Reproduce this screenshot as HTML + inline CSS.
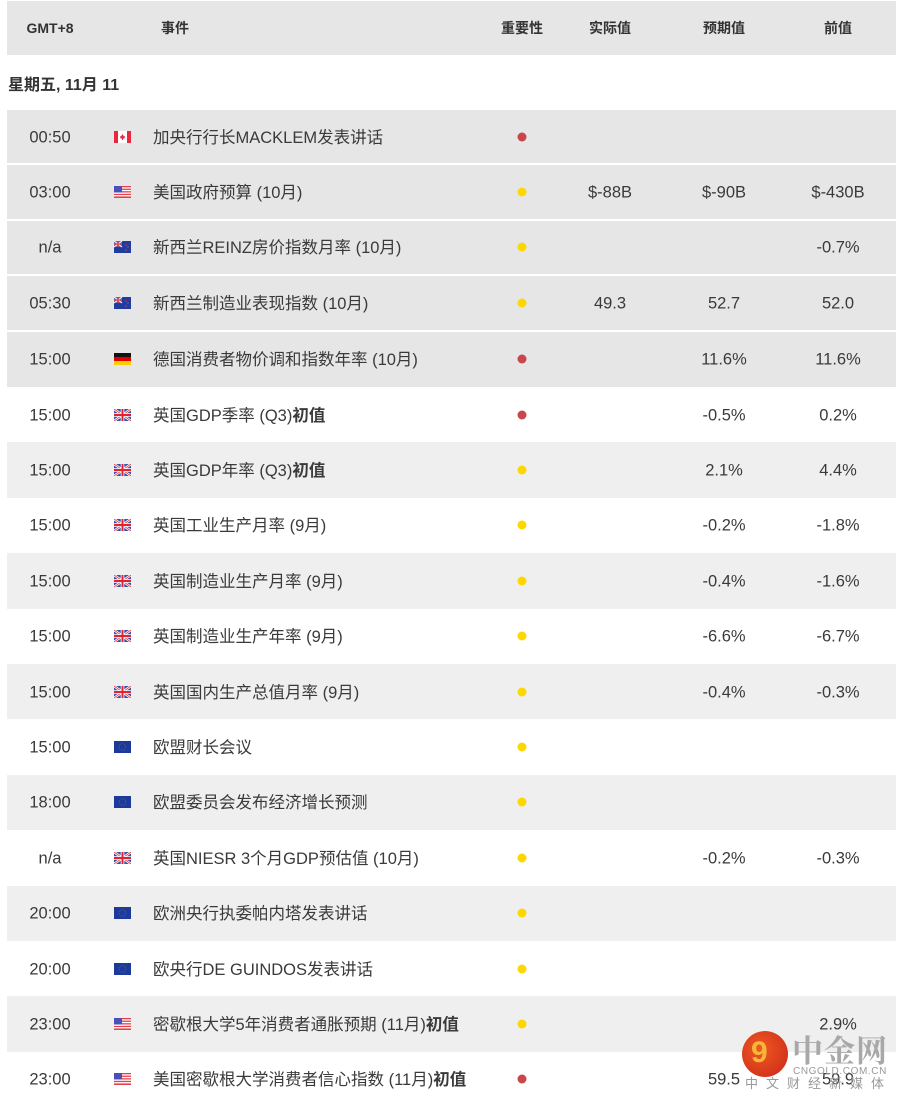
<!DOCTYPE html>
<html><head><meta charset="utf-8">
<style>
*{margin:0;padding:0;box-sizing:border-box}
body{width:899px;height:1104px;background:#fff;position:relative;overflow:hidden;font-family:"Liberation Sans","Noto Sans CJK SC",sans-serif;color:#3a3a3a}
.hdr{position:absolute;left:7px;top:1px;width:889px;height:54px;background:#e6e6e6;font-size:14px;font-weight:bold;color:#333}
.hdr span,.row span{position:absolute;top:50%;transform:translate(-50%,-50%);white-space:nowrap}
.date{position:absolute;left:8px;top:71px;font-size:16px;font-weight:bold;color:#333}
.row{position:absolute;left:7px;width:889px;height:55.4px;font-size:16.5px}
.g{background:#e6e6e6;height:53.4px}
.l{background:#efefef}
.w{background:#fff}
.row span{margin-top:1px}
.row span.ev{transform:translate(0,-50%);left:146px;margin-top:-1px}
.row span.dot{width:9px;height:9px;border-radius:50%;left:515px;margin-top:0}
.r{background:#c9464b}.y{background:#fcd700}
.t{left:43px}.a{left:603px}.f{left:717px}.p{left:831px}
.flag{position:absolute;left:107px;top:50%;margin-top:-6px;width:17px;height:12px}
b{font-weight:bold}
</style></head><body>
<svg width="0" height="0" style="position:absolute;left:0;top:0">
<defs>
<symbol id="ca" viewBox="0 0 17 12"><rect width="17" height="12" fill="#fff"/><rect width="4" height="12" fill="#e8283c"/><rect x="13" width="4" height="12" fill="#e8283c"/><path d="M8.5 3l1.5 2.5 1-.5-.5 2.5h-4l-.5-2.5 1 .5z" fill="#e8283c"/><rect x="8" y="7" width="1" height="2" fill="#e8283c"/></symbol>
<symbol id="us" viewBox="0 0 17 12"><rect width="17" height="12" fill="#fff"/><g fill="#e0414d"><rect y="0" width="17" height="1.3"/><rect y="2.6" width="17" height="1.3"/><rect y="5.2" width="17" height="1.3"/><rect y="7.8" width="17" height="1.3"/><rect y="10.4" width="17" height="1.6"/></g><rect width="8" height="6.5" fill="#4b50b8"/></symbol>
<symbol id="nz" viewBox="0 0 17 12"><rect width="17" height="12" fill="#1f3d9e"/><rect width="8" height="6" fill="#5a6bc0"/><path d="M0 0L8 6M8 0L0 6" stroke="#fff" stroke-width="1"/><path d="M4 0v6M0 3h8" stroke="#e33" stroke-width="1.3"/><g fill="#e33"><circle cx="12" cy="4" r=".8"/><circle cx="14" cy="6" r=".8"/><circle cx="12" cy="9" r=".8"/></g></symbol>
<symbol id="de" viewBox="0 0 17 12"><rect width="17" height="4" fill="#111"/><rect y="4" width="17" height="4" fill="#dd0000"/><rect y="8" width="17" height="4" fill="#ffce00"/></symbol>
<symbol id="gb" viewBox="0 0 17 12"><rect width="17" height="12" fill="#3b4ea8"/><path d="M0 0L17 12M17 0L0 12" stroke="#fff" stroke-width="2.4"/><path d="M0 0L17 12M17 0L0 12" stroke="#e33" stroke-width=".8"/><path d="M8.5 0v12M0 6h17" stroke="#fff" stroke-width="3.6"/><path d="M8.5 0v12M0 6h17" stroke="#e0232f" stroke-width="2"/></symbol>
<symbol id="eu" viewBox="0 0 17 12"><rect width="17" height="12" fill="#1b3a9c"/><circle cx="8.5" cy="6" r="3.3" fill="none" stroke="#6d6a5a" stroke-width=".7" stroke-dasharray="1 .9"/></symbol>
</defs></svg>

<div class="hdr"><span style="left:43px">GMT+8</span><span style="left:168px">事件</span><span style="left:515px">重要性</span><span style="left:603px">实际值</span><span style="left:717px">预期值</span><span style="left:831px">前值</span></div>
<div class="date">星期五, 11月 11</div>

<div class="row g" style="top:110px"><span class="t">00:50</span><svg class="flag" viewBox="0 0 17 12"><use href="#ca"/></svg><span class="ev">加央行行长MACKLEM发表讲话</span><span class="dot r"></span></div>
<div class="row g" style="top:165.4px"><span class="t">03:00</span><svg class="flag" viewBox="0 0 17 12"><use href="#us"/></svg><span class="ev">美国政府预算 (10月)</span><span class="dot y"></span><span class="a">$-88B</span><span class="f">$-90B</span><span class="p">$-430B</span></div>
<div class="row g" style="top:220.8px"><span class="t">n/a</span><svg class="flag" viewBox="0 0 17 12"><use href="#nz"/></svg><span class="ev">新西兰REINZ房价指数月率 (10月)</span><span class="dot y"></span><span class="p">-0.7%</span></div>
<div class="row g" style="top:276.2px"><span class="t">05:30</span><svg class="flag" viewBox="0 0 17 12"><use href="#nz"/></svg><span class="ev">新西兰制造业表现指数 (10月)</span><span class="dot y"></span><span class="a">49.3</span><span class="f">52.7</span><span class="p">52.0</span></div>
<div class="row g" style="top:331.6px;height:55.4px"><span class="t">15:00</span><svg class="flag" viewBox="0 0 17 12"><use href="#de"/></svg><span class="ev">德国消费者物价调和指数年率 (10月)</span><span class="dot r"></span><span class="f">11.6%</span><span class="p">11.6%</span></div>
<div class="row w" style="top:387px"><span class="t">15:00</span><svg class="flag" viewBox="0 0 17 12"><use href="#gb"/></svg><span class="ev">英国GDP季率 (Q3)<b>初值</b></span><span class="dot r"></span><span class="f">-0.5%</span><span class="p">0.2%</span></div>
<div class="row l" style="top:442.4px"><span class="t">15:00</span><svg class="flag" viewBox="0 0 17 12"><use href="#gb"/></svg><span class="ev">英国GDP年率 (Q3)<b>初值</b></span><span class="dot y"></span><span class="f">2.1%</span><span class="p">4.4%</span></div>
<div class="row w" style="top:497.8px"><span class="t">15:00</span><svg class="flag" viewBox="0 0 17 12"><use href="#gb"/></svg><span class="ev">英国工业生产月率 (9月)</span><span class="dot y"></span><span class="f">-0.2%</span><span class="p">-1.8%</span></div>
<div class="row l" style="top:553.2px"><span class="t">15:00</span><svg class="flag" viewBox="0 0 17 12"><use href="#gb"/></svg><span class="ev">英国制造业生产月率 (9月)</span><span class="dot y"></span><span class="f">-0.4%</span><span class="p">-1.6%</span></div>
<div class="row w" style="top:608.6px"><span class="t">15:00</span><svg class="flag" viewBox="0 0 17 12"><use href="#gb"/></svg><span class="ev">英国制造业生产年率 (9月)</span><span class="dot y"></span><span class="f">-6.6%</span><span class="p">-6.7%</span></div>
<div class="row l" style="top:664px"><span class="t">15:00</span><svg class="flag" viewBox="0 0 17 12"><use href="#gb"/></svg><span class="ev">英国国内生产总值月率 (9月)</span><span class="dot y"></span><span class="f">-0.4%</span><span class="p">-0.3%</span></div>
<div class="row w" style="top:719.4px"><span class="t">15:00</span><svg class="flag" viewBox="0 0 17 12"><use href="#eu"/></svg><span class="ev">欧盟财长会议</span><span class="dot y"></span></div>
<div class="row l" style="top:774.8px"><span class="t">18:00</span><svg class="flag" viewBox="0 0 17 12"><use href="#eu"/></svg><span class="ev">欧盟委员会发布经济增长预测</span><span class="dot y"></span></div>
<div class="row w" style="top:830.2px"><span class="t">n/a</span><svg class="flag" viewBox="0 0 17 12"><use href="#gb"/></svg><span class="ev">英国NIESR 3个月GDP预估值 (10月)</span><span class="dot y"></span><span class="f">-0.2%</span><span class="p">-0.3%</span></div>
<div class="row l" style="top:885.6px"><span class="t">20:00</span><svg class="flag" viewBox="0 0 17 12"><use href="#eu"/></svg><span class="ev">欧洲央行执委帕内塔发表讲话</span><span class="dot y"></span></div>
<div class="row w" style="top:941px"><span class="t">20:00</span><svg class="flag" viewBox="0 0 17 12"><use href="#eu"/></svg><span class="ev">欧央行DE GUINDOS发表讲话</span><span class="dot y"></span></div>
<div class="row l" style="top:996.4px"><span class="t">23:00</span><svg class="flag" viewBox="0 0 17 12"><use href="#us"/></svg><span class="ev">密歇根大学5年消费者通胀预期 (11月)<b>初值</b></span><span class="dot y"></span><span class="p">2.9%</span></div>
<div class="row w" style="top:1051.8px"><span class="t">23:00</span><svg class="flag" viewBox="0 0 17 12"><use href="#us"/></svg><span class="ev">美国密歇根大学消费者信心指数 (11月)<b>初值</b></span><span class="dot r"></span><span class="f">59.5</span><span class="p">59.9</span></div>

<div style="position:absolute;left:742px;top:1031px;width:46px;height:46px;border-radius:50%;background:radial-gradient(circle at 40% 40%,#ee5a1f,#c9251b)"></div>
<div style="position:absolute;left:751px;top:1038px;font-size:30px;line-height:30px;font-weight:bold;color:#f7b63a">9</div>
<div style="position:absolute;left:792px;top:1031px;font-size:31px;line-height:36px;font-weight:bold;color:#a8a8a8;letter-spacing:1px;white-space:nowrap;font-family:'Noto Serif CJK SC',serif">中金网</div>
<div style="position:absolute;left:793px;top:1066px;font-size:10px;line-height:11px;color:#999;letter-spacing:.6px;white-space:nowrap">CNGOLD.COM.CN</div>
<div style="position:absolute;left:745px;top:1077px;font-size:13px;line-height:14px;color:#999;letter-spacing:8px;white-space:nowrap">中文财经新媒体</div>
</body></html>
